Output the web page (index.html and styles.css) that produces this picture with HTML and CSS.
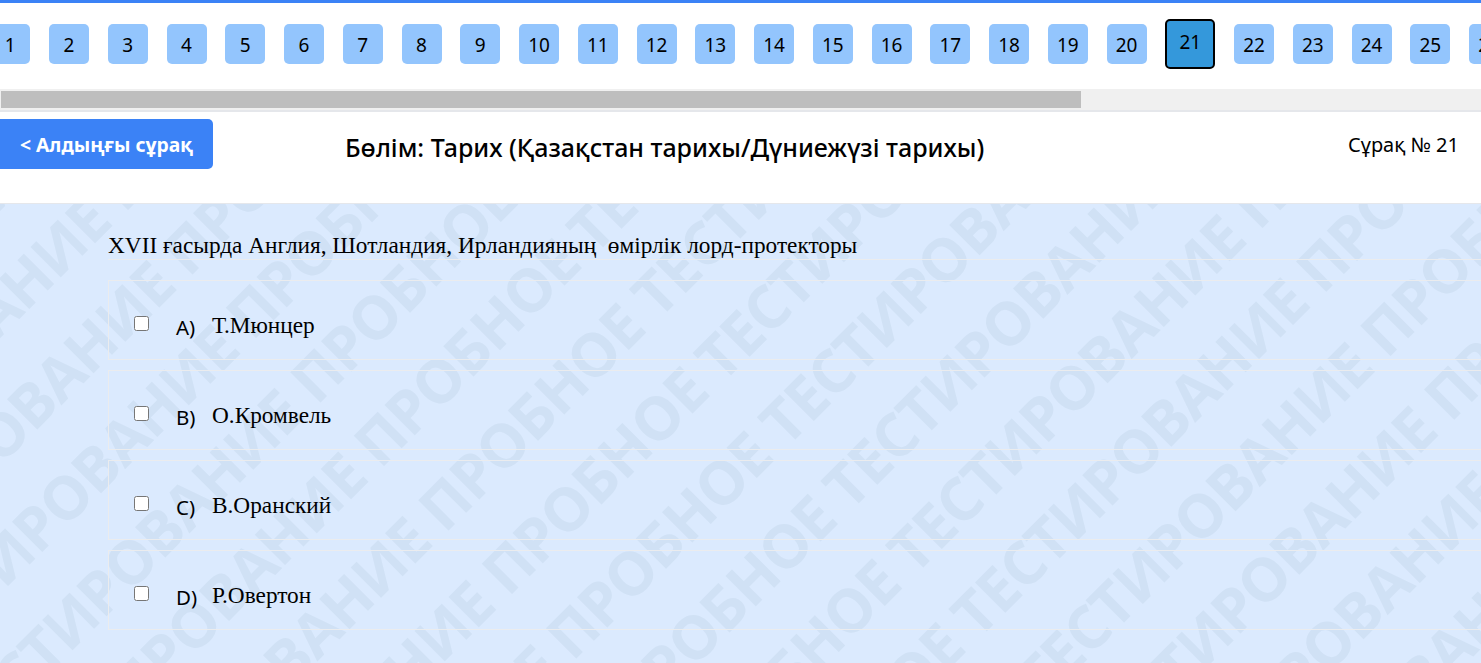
FILE: index.html
```html
<!DOCTYPE html>
<html lang="kk">
<head>
<meta charset="utf-8">
<title>Сұрақ № 21</title>
<link rel="stylesheet" href="styles.css">
</head>
<body>
<div class="topline"></div>
<nav class="pager">
  <a class="num">1</a><a class="num">2</a><a class="num">3</a><a class="num">4</a><a class="num">5</a><a class="num">6</a><a class="num">7</a><a class="num">8</a><a class="num">9</a><a class="num">10</a><a class="num">11</a><a class="num">12</a><a class="num">13</a><a class="num">14</a><a class="num">15</a><a class="num">16</a><a class="num">17</a><a class="num">18</a><a class="num">19</a><a class="num">20</a><a class="num current">21</a><a class="num">22</a><a class="num">23</a><a class="num">24</a><a class="num">25</a><a class="num">26</a>
</nav>
<div class="scrollbar"><div class="thumb"></div></div>
<header class="head">
  <button class="prev">&lt; Алдыңғы сұрақ</button>
  <h1 class="title">Бөлім: Тарих (Қазақстан тарихы/Дүниежүзі тарихы)</h1>
  <div class="qno">Сұрақ № 21</div>
</header>
<main class="main">
  <div class="wm" aria-hidden="true">
    <div class="wm-rot">
      <div>ПРОБНОЕ ТЕСТИРОВАНИЕ ПРОБНОЕ ТЕСТИРОВАНИЕ ПРОБНОЕ ТЕСТИРОВАНИЕ ПРОБНОЕ ТЕСТИРОВАНИЕ</div>
      <div>ПРОБНОЕ ТЕСТИРОВАНИЕ ПРОБНОЕ ТЕСТИРОВАНИЕ ПРОБНОЕ ТЕСТИРОВАНИЕ ПРОБНОЕ ТЕСТИРОВАНИЕ</div>
      <div>ПРОБНОЕ ТЕСТИРОВАНИЕ ПРОБНОЕ ТЕСТИРОВАНИЕ ПРОБНОЕ ТЕСТИРОВАНИЕ ПРОБНОЕ ТЕСТИРОВАНИЕ</div>
      <div>ПРОБНОЕ ТЕСТИРОВАНИЕ ПРОБНОЕ ТЕСТИРОВАНИЕ ПРОБНОЕ ТЕСТИРОВАНИЕ ПРОБНОЕ ТЕСТИРОВАНИЕ</div>
      <div>ПРОБНОЕ ТЕСТИРОВАНИЕ ПРОБНОЕ ТЕСТИРОВАНИЕ ПРОБНОЕ ТЕСТИРОВАНИЕ ПРОБНОЕ ТЕСТИРОВАНИЕ</div>
      <div>ПРОБНОЕ ТЕСТИРОВАНИЕ ПРОБНОЕ ТЕСТИРОВАНИЕ ПРОБНОЕ ТЕСТИРОВАНИЕ ПРОБНОЕ ТЕСТИРОВАНИЕ</div>
      <div>ПРОБНОЕ ТЕСТИРОВАНИЕ ПРОБНОЕ ТЕСТИРОВАНИЕ ПРОБНОЕ ТЕСТИРОВАНИЕ ПРОБНОЕ ТЕСТИРОВАНИЕ</div>
      <div>ПРОБНОЕ ТЕСТИРОВАНИЕ ПРОБНОЕ ТЕСТИРОВАНИЕ ПРОБНОЕ ТЕСТИРОВАНИЕ ПРОБНОЕ ТЕСТИРОВАНИЕ</div>
      <div>ПРОБНОЕ ТЕСТИРОВАНИЕ ПРОБНОЕ ТЕСТИРОВАНИЕ ПРОБНОЕ ТЕСТИРОВАНИЕ ПРОБНОЕ ТЕСТИРОВАНИЕ</div>
      <div>ПРОБНОЕ ТЕСТИРОВАНИЕ ПРОБНОЕ ТЕСТИРОВАНИЕ ПРОБНОЕ ТЕСТИРОВАНИЕ ПРОБНОЕ ТЕСТИРОВАНИЕ</div>
      <div>ПРОБНОЕ ТЕСТИРОВАНИЕ ПРОБНОЕ ТЕСТИРОВАНИЕ ПРОБНОЕ ТЕСТИРОВАНИЕ ПРОБНОЕ ТЕСТИРОВАНИЕ</div>
      <div>ПРОБНОЕ ТЕСТИРОВАНИЕ ПРОБНОЕ ТЕСТИРОВАНИЕ ПРОБНОЕ ТЕСТИРОВАНИЕ ПРОБНОЕ ТЕСТИРОВАНИЕ</div>
      <div>ПРОБНОЕ ТЕСТИРОВАНИЕ ПРОБНОЕ ТЕСТИРОВАНИЕ ПРОБНОЕ ТЕСТИРОВАНИЕ ПРОБНОЕ ТЕСТИРОВАНИЕ</div>
      <div>ПРОБНОЕ ТЕСТИРОВАНИЕ ПРОБНОЕ ТЕСТИРОВАНИЕ ПРОБНОЕ ТЕСТИРОВАНИЕ ПРОБНОЕ ТЕСТИРОВАНИЕ</div>
      <div>ПРОБНОЕ ТЕСТИРОВАНИЕ ПРОБНОЕ ТЕСТИРОВАНИЕ ПРОБНОЕ ТЕСТИРОВАНИЕ ПРОБНОЕ ТЕСТИРОВАНИЕ</div>
      <div>ПРОБНОЕ ТЕСТИРОВАНИЕ ПРОБНОЕ ТЕСТИРОВАНИЕ ПРОБНОЕ ТЕСТИРОВАНИЕ ПРОБНОЕ ТЕСТИРОВАНИЕ</div>
      <div>ПРОБНОЕ ТЕСТИРОВАНИЕ ПРОБНОЕ ТЕСТИРОВАНИЕ ПРОБНОЕ ТЕСТИРОВАНИЕ ПРОБНОЕ ТЕСТИРОВАНИЕ</div>
      <div>ПРОБНОЕ ТЕСТИРОВАНИЕ ПРОБНОЕ ТЕСТИРОВАНИЕ ПРОБНОЕ ТЕСТИРОВАНИЕ ПРОБНОЕ ТЕСТИРОВАНИЕ</div>
    </div>
  </div>
  <div class="content">
    <div class="question">XVII ғасырда Англия, Шотландия, Ирландияның&nbsp; өмірлік лорд-протекторы</div>
    <div class="options">
      <label class="option"><input type="checkbox" class="check"><span class="letter">A)</span><span class="answer">Т.Мюнцер</span></label>
      <label class="option"><input type="checkbox" class="check"><span class="letter">B)</span><span class="answer">О.Кромвель</span></label>
      <label class="option"><input type="checkbox" class="check"><span class="letter">C)</span><span class="answer">В.Оранский</span></label>
      <label class="option"><input type="checkbox" class="check"><span class="letter">D)</span><span class="answer">Р.Овертон</span></label>
    </div>
  </div>
</main>
</body>
</html>
```

FILE: styles.css
```css
* { box-sizing: border-box; }

html, body {
  margin: 0;
  height: 663px;
  overflow: hidden;
  background: #fff;
  color: #000;
  font-family: "Noto Sans", "Open Sans", sans-serif;
}

.topline { height: 3px; background: #3b82f6; }

.pager {
  display: flex;
  align-items: center;
  gap: 18.75px;
  height: 86px;
  padding: 16px 0 20px;
  margin-left: -9.75px;
  overflow: hidden;
}

.num {
  flex: none;
  display: flex;
  align-items: center;
  justify-content: center;
  width: 40px;
  height: 40px;
  padding-top: 2px;
  border-radius: 5px;
  background: #93c5fd;
  font-size: 19px;
}

.current {
  width: 50px;
  height: 50px;
  padding: 0 0 5px;
  border: 2px solid #000;
  background: #3498db;
}

.scrollbar {
  height: 23px;
  padding: 2px 0 2px 1px;
  background: #f0f0f0;
  border-bottom: 2px solid #e5e7eb;
}

.thumb { width: 1080px; height: 17px; background: #bebebe; }

.head {
  display: flex;
  align-items: flex-start;
  height: 91px;
  padding-top: 7px;
}

.prev {
  flex: none;
  width: 213px;
  height: 50px;
  padding: 0;
  border: 0;
  border-radius: 0 5px 5px 0;
  background: #3b82f6;
  color: #fff;
  font: 700 19.3px "Noto Sans", sans-serif;
}

.title {
  flex: none;
  margin: 0 0 0 132px;
  font-size: 25px;
  font-weight: 500;
  line-height: 56px;
}

.qno {
  margin-left: auto;
  padding-right: 22px;
  font-size: 20px;
  line-height: 52px;
}

.main {
  position: relative;
  height: 460px;
  overflow: hidden;
  border-top: 1px solid #e5e7eb;
  background: #dbeafe;
}

.wm { position: absolute; inset: 0; overflow: hidden; }

.wm-rot {
  position: absolute;
  left: -610px;
  top: 392px;
  width: 3400px;
  transform: rotate(-45deg);
  transform-origin: 0 0;
  color: #d0e1f5;
  font: 700 60px/90.5px "Open Sans", sans-serif;
  letter-spacing: -1.15px;
  white-space: nowrap;
}

.content {
  position: relative;
  padding: 22px 0 0 108px;
}

.question {
  width: 1500px;
  height: 34px;
  border-bottom: 1px solid #ebecee;
  font: 23.3px/38px "Liberation Serif", serif;
}

.options {
  display: flex;
  flex-direction: column;
  gap: 10px;
  width: 1500px;
  margin-top: 20px;
}

.option {
  display: flex;
  align-items: flex-start;
  height: 80px;
  padding: 35px 0 0 25px;
  border: 1px solid #ebecee;
}

.check { width: 15px; height: 15px; margin: 0; flex: none; }

.letter {
  width: 36px;
  margin-left: 27px;
  font-size: 20.5px;
  line-height: 22px;
  flex: none;
}

.answer {
  font: 23.3px/18px "Liberation Serif", serif;
}
```
